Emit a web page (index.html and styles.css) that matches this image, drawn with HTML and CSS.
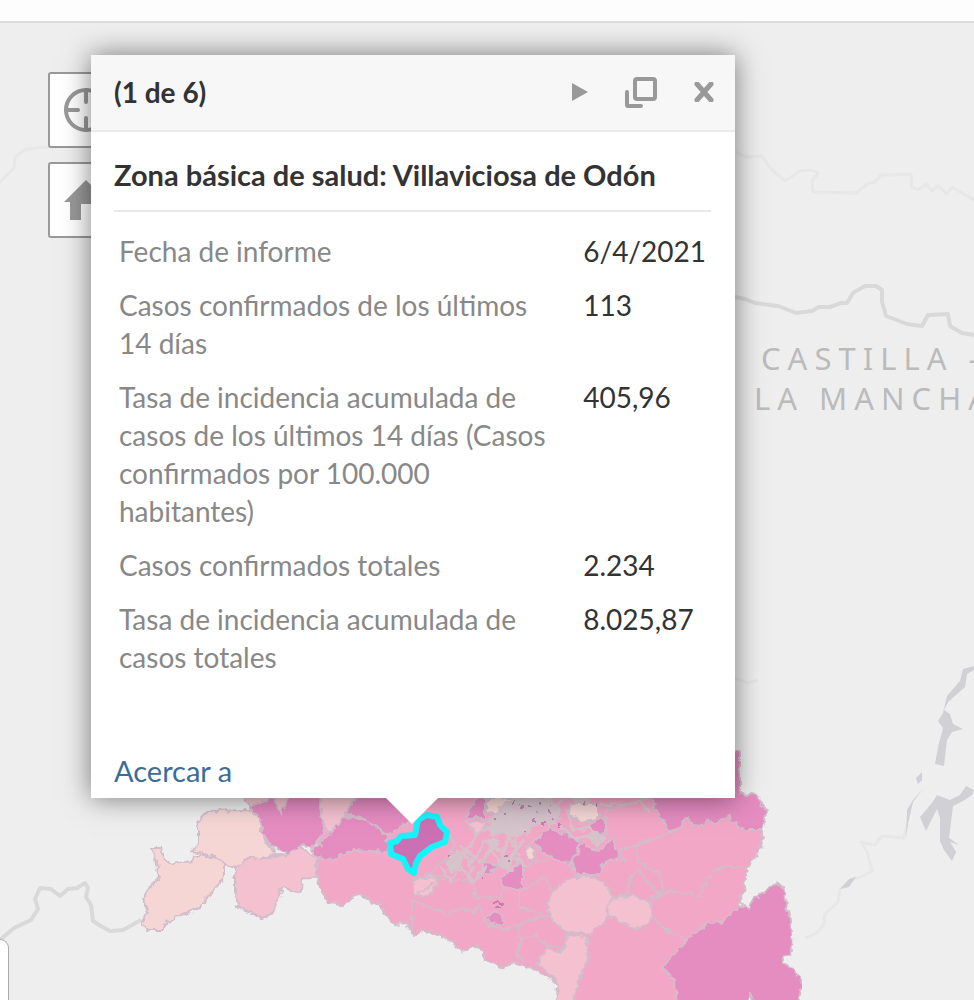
FILE: index.html
```html
<!DOCTYPE html>
<html lang="es">
<head>
  <meta charset="UTF-8">
  <title>Zonas básicas de salud</title>
  <meta name="viewport" content="width=device-width, initial-scale=1">
  <link rel="stylesheet" href="styles.css">
</head>
<body>
  <header class="top-bar"></header>

  <main class="map">
    <svg class="map-canvas" viewBox="0 23 974 977" preserveAspectRatio="xMinYMin slice" aria-hidden="true">
      <defs>
        <filter id="rough" x="0" y="0" width="100%" height="100%">
          <feTurbulence type="fractalNoise" baseFrequency="0.16" numOctaves="2" seed="4" result="noise"/>
          <feDisplacementMap in="SourceGraphic" in2="noise" scale="7" xChannelSelector="R" yChannelSelector="G"/>
        </filter>
      </defs>

      <!-- province borders -->
      <g class="border-soft">
        <path d="M0 182L14 168L15 157L26 149L48 147M735 152L747 157L762 156L770 168L785 181L800 171L812 170L818 173L812 181L813 192L856 193L867 184L875 182L881 175L892 175L911 174L912 187L918 190L926 184L932 191L938 186L947 194L952 187L974 200"/>
        <path d="M735 678L748 683L758 680M806 938L817 933L824 924L825 914L838 902L840 889L850 884M850 880L861 877L872 871L867 852L861 842L875 845L882 836L904 838L907 825"/>
      </g>
      <g class="border">
        <path d="M735 297L745 299L755 303L778 306L796 313L812 311L819 307L830 307L841 303L847 303L853 293L865 286L876 286L882 290L882 302L886 316L907 324L922 326L928 315L948 314L950 326L962 333L974 335"/>
        <path d="M0 940L14 928L31 920L38 909L35 899L40 888L51 889L60 896L68 889L77 888L85 883L88 888L86 897L91 905L93 921L101 926L110 931L123 930L141 920"/>
      </g>

      <!-- reservoirs -->
      <g class="water">
        <path d="M974 666L963 669L960 681L947 696L943 713L938 721L943 728L938 747L935 764L944 766L947 740L952 732L963 729L953 724L950 714L944 710L948 702L965 687L967 674L974 670Z"/>
        <path d="M922 772L922 780L918 784L916 778ZM923 789L913 802L908 824L906 838L907 810L913 800Z"/>
        <path d="M920 817L926 831L937 809L940 818L940 841L944 850L952 861L956 852L950 842L959 845L949 838L953 806L963 801L972 795L974 790L966 786L960 795L950 800L937 795L932 803Z"/>
        <path d="M840 889L849 887L856 877L849 879Z"/>
      </g>

      <!-- health zones -->
      <g class="zones" filter="url(#rough)">
        <path class="z3" d="M320 790L317 878L327 902L343 906L358 893L378 905L395 924L407 923L413 935L427 930L447 938L462 952L477 945L487 960L500 968L512 962L530 967L547 977L560 987L558 1010L700 1010L740 903L745 887L747 868L760 850L763 838L760 828L735 790Z"/>
        <path class="z1" d="M152 848L161 848L165 860L172 864L192 861L194 856L213 856L224 863L224 878L200 907L167 922L163 930L150 930L141 925L145 917L148 912L143 898L150 887L159 878L156 863Z"/>
        <path class="z1" d="M198 823L208 811L248 810L253 813L260 817L262 833L268 843L278 855L260 859L248 858L235 868L224 863L213 856L192 852L198 843Z"/>
        <path class="z2" d="M235 868L248 858L260 859L278 855L287 856L298 845L312 855L317 860L317 878L303 877L302 892L282 888L273 913L262 918L252 913L238 907L235 890Z"/>
        <path class="z2" d="M240 790L250 808L265 803L275 790Z"/>
        <path class="z4" d="M250 806L275 797L275 790L320 790L321 815L325 832L312 848L302 845L287 855L268 843L262 833L260 817L252 812Z"/>
        <path class="z2" d="M275 790L275 799L281 814L289 798L289 790Z"/>
        <path class="z2" d="M320 790L321 815L328 835L343 820L345 813L362 790Z"/>
        <path class="z4" d="M312 850L325 840L343 817L367 820L387 835L388 852L353 850L333 860L317 858Z"/>
        <path class="z4" d="M345 813L362 790L420 790L412 820L388 835L367 820Z"/>
        <path class="z4" d="M650 790L655 808L670 833L683 825L688 816L692 825L703 826L708 819L715 825L728 816L733 822L747 830L762 830L767 813L757 795L740 793L740 750L730 750L730 790Z"/>
        <path class="z4" d="M775 883L783 888L790 920L792 952L783 957L783 963L793 968L802 983L797 1010L757 1010L750 993L742 1010L677 1010L675 980L662 968L685 942L707 923L723 922L740 905L748 908L755 898Z"/>
        <path class="z4" d="M533 842L550 828L582 842L570 863L555 860L540 850Z"/>
        <path class="z4" d="M572 860L583 843L597 852L613 838L619 858L603 863L600 875L577 875Z"/>
        <path class="z4" d="M502 877L512 868L523 863L523 890L503 887Z"/>
        <path class="z4" d="M485 918L493 912L503 915L502 925L492 924Z"/>
        <path class="z4" d="M482 862L497 865L490 875L482 870Z"/>
        <path class="z4" d="M588 825L605 817L605 833L594 834Z"/>
        <path class="z4" d="M466 818L475 800L485 795L485 818Z"/>
        <path class="z2" d="M547 903L557 887L570 878L587 875L605 883L612 897L605 923L590 933L567 933L550 917Z"/>
        <path class="z2" d="M607 907L613 898L633 895L650 902L653 917L640 930L627 925L608 915Z"/>
        <path class="z2" d="M537 963L547 947L560 953L568 935L587 937L588 960L580 977L572 1010L556 1010L558 983Z"/>
        <path class="z2" d="M413 880L433 873L438 883L428 897L415 895Z"/>
        <path class="z2" d="M465 822L486 820L484 828L476 833Z"/>
        <path class="z1" d="M569 804L598 804L598 820L580 822L570 815Z"/>
        <path class="z1" d="M527 844L536 850L534 860L526 858Z"/>
        <path class="z1" d="M487 798L514 798L500 812L486 814Z"/>
        <path class="line" d="M412 935L412 900L430 908L447 914L462 909L475 913L478 903L486 924L505 929L520 925L535 918L548 916M415 895L440 879L472 881L476 898L500 897L504 888"/>
        <path class="line" d="M523 890L545 877L552 890M520 890L520 906L548 917M518 925L520 940L517 955L524 962M520 940L535 935L548 945L560 948M548 860L533 862L525 868M570 862L576 876M620 850L645 842L670 833M605 812L650 797M607 835L606 812M636 845L637 860L660 875L663 890L650 900M612 898L628 892L630 878L637 870L660 895M619 850L625 862M655 900L665 892L680 892L700 896L707 878L722 866L747 868M653 917L665 930L680 935L685 942M450 865L443 875L412 880M450 835L455 846L448 858L430 872"/>
      </g>

      <!-- small city districts -->
      <g filter="url(#rough)">
        <path class="city" d="M500 806L512 798L552 798L560 810L556 824L540 824L528 830L516 838L502 834L492 838L488 828Z"/>
        <path class="city" d="M446 862L456 850L464 856L460 868L450 874ZM500 856L514 858L508 872L500 866ZM584 834L596 830L606 838L596 848ZM572 798L592 798L590 804L576 804ZM488 838L500 840L498 850L488 848Z"/>
        <path class="city-line" d="M488 822L515 806L545 812L562 800M494 836L516 820L538 824L562 818M500 806L508 828L520 812L528 834L540 804L548 826L556 806M452 860L466 850L480 862L494 846L510 858L524 840M462 846L470 866L486 840L500 864L508 838L520 856M566 808L574 830L590 828L600 840M590 832L596 842L606 836M440 868L450 880L462 868L474 882L486 866M502 862L508 872L518 862M560 826L574 838L586 836M466 850L478 834L492 826M516 838L514 858L526 866M474 866L466 880M600 806L640 802L650 812"/>
        <path class="city-dot" d="M494 818h2M504 814h2M520 806h4M528 807h4M538 802h3M549 812h2M553 818h2M513 803h2M533 820h2M542 824h3M558 826h2M505 856h3M508 860h2M493 903h10M494 908h8M524 832h2M550 804h2M536 812h2M448 856h2M480 878h2M584 803h2M596 804h2"/>
      </g>

      <path class="selected" d="M390 843L397 841L401 836L415 835L418 820L427 815L437 817L440 825L447 832L445 842L432 847L420 856L416 863L414 873L408 869L403 859L391 854Z"/>

      <text class="region-name" x="761" y="370">CASTILLA -</text>
      <text class="region-name" x="754" y="410">LA MANCHA</text>
    </svg>

    <div class="map-controls">
      <button type="button" aria-label="Mi ubicación">
        <svg viewBox="0 0 44 44"><circle cx="22" cy="22" r="20"/><path d="M22 2v12M22 30v12M2 22h12M30 22h12"/></svg>
      </button>
      <button type="button" aria-label="Inicio">
        <svg class="filled" viewBox="0 0 44 44"><path d="M22 2L44 24H38V42H27V26H17V42H6V24H0Z"/></svg>
      </button>
    </div>

    <section class="popup">
      <div class="popup-header">
        <span class="popup-count">(1 de 6)</span>
        <div class="popup-actions">
          <button type="button" aria-label="Siguiente">
            <svg class="filled" width="16" height="18" viewBox="0 0 16 18"><path d="M0 0L16 9L0 18Z"/></svg>
          </button>
          <button type="button" aria-label="Maximizar">
            <svg width="32" height="32" viewBox="0 0 32 32"><rect x="10" y="3" width="20" height="20" rx="2"/><path d="M2 16V29Q2 30 3 30H16"/></svg>
          </button>
          <button type="button" aria-label="Cerrar">
            <svg class="thick" width="20" height="20" viewBox="0 0 20 20"><path d="M3 2L17 18M17 2L3 18"/></svg>
          </button>
        </div>
      </div>
      <div class="popup-body">
        <h1>Zona básica de salud: Villaviciosa de Odón</h1>
        <table>
          <tr><th scope="row">Fecha de informe</th><td>6/4/2021</td></tr>
          <tr><th scope="row">Casos confirmados de los últimos 14 días</th><td>113</td></tr>
          <tr><th scope="row">Tasa de incidencia acumulada de casos de los últimos 14 días (Casos confirmados por 100.000 habitantes)</th><td>405,96</td></tr>
          <tr><th scope="row">Casos confirmados totales</th><td>2.234</td></tr>
          <tr><th scope="row">Tasa de incidencia acumulada de casos totales</th><td>8.025,87</td></tr>
        </table>
        <a class="zoom-link" href="#">Acercar a</a>
      </div>
    </section>

    <div class="side-panel"></div>
  </main>
</body>
</html>
```

FILE: styles.css
```css
* {
  box-sizing: border-box;
}

body {
  margin: 0;
  min-height: 100vh;
  display: flex;
  flex-direction: column;
  font-family: Lato, sans-serif;
  font-size: 28px;
  line-height: 38px;
  color: #333;
  background: #eee;
}

.top-bar {
  height: 23px;
  background: #fdfdfd;
  border-bottom: 2px solid #dcdcdc;
}

.map {
  position: relative;
  flex: 1;
  overflow: hidden;
}

.map-canvas {
  position: absolute;
  top: 0;
  left: 0;
  width: 100%;
  height: 100%;
}

.border,
.border-soft {
  fill: none;
  stroke: #d9d9d9;
  stroke-width: 4;
  stroke-linejoin: round;
}

.border-soft {
  stroke: #e7e7e7;
  stroke-width: 3;
}

.water {
  fill: #d0d0d5;
}

.zones path {
  stroke: #d3bdca;
  stroke-width: 2;
  stroke-linejoin: round;
}

.zones .z1 { fill: #f5d6d5; }
.zones .z2 { fill: #f4c1d0; }
.zones .z3 { fill: #f3a7c6; }
.zones .z4 { fill: #e58cc1; }
.zones .line { fill: none; }

.city {
  fill: #d6c4cb;
}

.city-line {
  fill: none;
  stroke: #d6c2cb;
  stroke-width: 3;
}

.city-dot {
  stroke: #c07fb0;
  stroke-width: 2;
}

.selected {
  fill: #cb70b4;
  stroke: #12f5fb;
  stroke-width: 6;
  stroke-linejoin: round;
}

.region-name {
  font-family: "Noto Sans", sans-serif;
  font-size: 31px;
  letter-spacing: 7px;
  fill: #bbb;
}

.map-controls {
  position: absolute;
  top: 49px;
  left: 48px;
  display: flex;
  flex-direction: column;
  gap: 14px;
}

.map-controls button {
  width: 76px;
  height: 76px;
  padding: 0;
  display: flex;
  align-items: center;
  justify-content: center;
  background: #fff;
  border: 2px solid #999;
  border-radius: 3px;
}

.map-controls svg {
  width: 44px;
  height: 44px;
}

button svg {
  display: block;
  fill: none;
  stroke: #999;
  stroke-width: 4;
  stroke-linecap: round;
}

button svg.filled {
  fill: #999;
  stroke: none;
}

button svg.thick {
  stroke-width: 5;
}

.popup {
  position: absolute;
  top: 32px;
  left: 91px;
  width: 644px;
  background: #fff;
  box-shadow: 0 0 26px rgba(0, 0, 0, 0.5);
}

.popup::after {
  content: "";
  position: absolute;
  top: 100%;
  left: 295px;
  border: 26px solid transparent;
  border-top-color: #fff;
  border-bottom: 0;
}

.popup-header {
  display: flex;
  align-items: center;
  justify-content: space-between;
  height: 77px;
  padding: 0 21px 2px 23px;
  background: #f7f7f7;
  border-bottom: 2px solid #ebebeb;
}

.popup-count {
  font-weight: 700;
}

.popup-actions {
  display: flex;
  align-items: center;
  gap: 37px;
}

.popup-actions button {
  padding: 0;
  background: none;
  border: 0;
}

.popup-body {
  padding: 24px 24px 8px 23px;
}

.popup h1 {
  margin: 0 0 12px;
  padding-bottom: 16px;
  font-size: 29px;
  font-weight: 700;
  border-bottom: 2px solid #e8e8e8;
}

.popup table {
  width: 100%;
  border-collapse: collapse;
}

.popup th,
.popup td {
  padding: 8px 5px;
  text-align: left;
  vertical-align: top;
  font-weight: 400;
}

.popup th {
  padding-right: 32px;
  color: #888;
}

.popup td {
  width: 130px;
}

.zoom-link {
  display: inline-block;
  margin-top: 68px;
  font-size: 29px;
  color: #3b6d97;
  text-decoration: none;
}

.side-panel {
  position: absolute;
  bottom: 0;
  left: 0;
  width: 9px;
  height: 61px;
  background: #fff;
  border: 1px solid #aaa;
  border-width: 1px 1px 0 0;
  border-top-right-radius: 9px;
}
```
